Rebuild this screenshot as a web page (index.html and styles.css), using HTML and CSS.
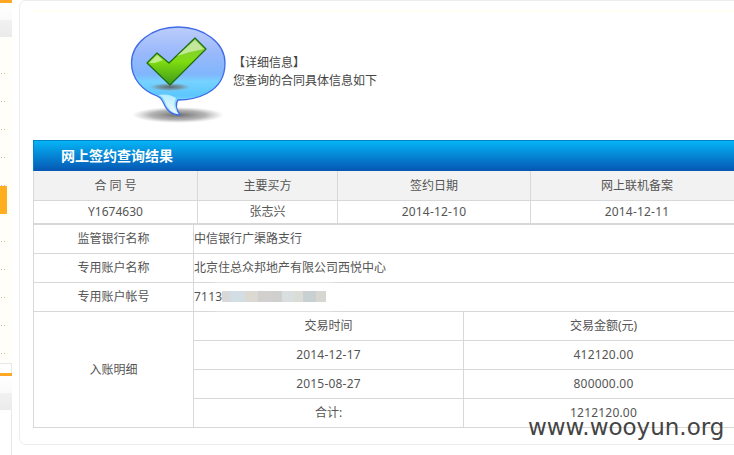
FILE: index.html
```html
<!DOCTYPE html>
<html lang="zh">
<head>
<meta charset="utf-8">
<title>网上签约查询结果</title>
<link rel="stylesheet" href="styles.css">
</head>
<body>
<div class="page">
  <aside class="sidebar">
    <div class="side-panel">
      <div class="side-head"></div>
      <ul class="side-list">
        <li></li><li></li><li></li><li></li><li></li>
        <li class="current"></li><li></li><li></li><li></li><li></li><li></li>
      </ul>
    </div>
    <div class="side-head second"></div>
  </aside>
  <main class="card">
    <div class="notice-line"></div>
    <section class="intro">
      <svg class="intro-icon" width="100" height="112" viewBox="0 0 100 112" aria-hidden="true">
        <defs>
          <linearGradient id="bubble" x1="0" y1="0" x2="0" y2="1">
            <stop offset="0" stop-color="#bccdfb"/>
            <stop offset="0.3" stop-color="#99b8fb"/>
            <stop offset="0.54" stop-color="#80b6fc"/>
            <stop offset="0.62" stop-color="#76d2ff"/>
            <stop offset="0.78" stop-color="#5cc6fd"/>
            <stop offset="0.88" stop-color="#97e2fe"/>
            <stop offset="1" stop-color="#c8f2fe"/>
          </linearGradient>
          <linearGradient id="tail" x1="0" y1="0" x2="0" y2="1">
            <stop offset="0" stop-color="#b4ecfe"/>
            <stop offset="1" stop-color="#eef9fe"/>
          </linearGradient>
          <linearGradient id="check" x1="0" y1="0" x2="0" y2="1">
            <stop offset="0" stop-color="#8cc850"/>
            <stop offset="0.5" stop-color="#7fdc10"/>
            <stop offset="1" stop-color="#3d9a1c"/>
          </linearGradient>
          <radialGradient id="shade">
            <stop offset="0" stop-color="#555" stop-opacity="0.85"/>
            <stop offset="0.6" stop-color="#777" stop-opacity="0.55"/>
            <stop offset="1" stop-color="#999" stop-opacity="0"/>
          </radialGradient>
        </defs>
        <ellipse cx="48" cy="98" rx="46" ry="8" fill="url(#shade)"/>
        <path d="M48 10C22 10 1.500 26 1.500 46C1.500 62 13 74 27 79C33 81 33 87 37 92C41 97 45 98 50 98C46 92 45 87 48 83C62 83 95 78 95 46C95 26 74 10 48 10Z" fill="url(#bubble)" stroke="#3f6ae8" stroke-width="1.300" stroke-linejoin="round"/>
        <path d="M28 78C35 80 35 87 39 91C42 95 44 96 47 96C44 91 43 87 46 81C40 77 34 77 28 78Z" fill="url(#tail)"/>
        <ellipse cx="40" cy="70" rx="21" ry="4" fill="url(#shade)"/>
        <path d="M17 46L27 36L39 46L65 21L76 32L40 68Z" fill="url(#check)" stroke="#1d6d12" stroke-width="1.200" stroke-linejoin="round"/>
        <path d="M19 46L27 38L33 43L25 46ZM47 39L65 23L74 32L60 35Z" fill="#fff" opacity="0.5"/>
      </svg>
      <div class="intro-text">
        <p>【详细信息】</p>
        <p>您查询的合同具体信息如下</p>
      </div>
    </section>
    <h2 class="banner">网上签约查询结果</h2>
    <table class="summary">
      <colgroup><col class="s1"><col class="s2"><col class="s3"><col class="s4"></colgroup>
      <thead>
        <tr><th>合 同 号</th><th>主要买方</th><th>签约日期</th><th>网上联机备案</th></tr>
      </thead>
      <tbody>
        <tr><td>Y1674630</td><td>张志兴</td><td class="num">2014-12-10</td><td class="num">2014-12-11</td></tr>
      </tbody>
    </table>
    <table class="details">
      <colgroup><col class="d1"><col class="d2"><col class="d3"></colgroup>
      <tbody>
        <tr><td>监管银行名称</td><td class="value" colspan="2">中信银行广渠路支行</td></tr>
        <tr><td>专用账户名称</td><td class="value" colspan="2">北京住总众邦地产有限公司西悦中心</td></tr>
        <tr><td>专用账户帐号</td><td class="value" colspan="2"><span class="account"><span class="digits">7113</span><span class="mosaic"></span></span></td></tr>
        <tr><td rowspan="4">入账明细</td><td>交易时间</td><td>交易金额(元)</td></tr>
        <tr><td class="num">2014-12-17</td><td class="num">412120.00</td></tr>
        <tr><td class="num">2015-08-27</td><td class="num">800000.00</td></tr>
        <tr><td>合计:</td><td class="num">1212120.00</td></tr>
      </tbody>
    </table>
  </main>
</div>
<div class="watermark">www.wooyun.org</div>
</body>
</html>
```
FILE: styles.css
```css
html, body {
  margin: 0;
  padding: 0;
  width: 734px;
  height: 455px;
  overflow: hidden;
  background: #fff;
  font-family: "Noto Sans", "Noto Sans CJK SC", sans-serif;
  font-size: 12px;
  color: #555;
}
.page {
  display: flex;
  align-items: flex-start;
  width: 800px;
  height: 455px;
}
.sidebar {
  flex: none;
  width: 11px;
  height: 455px;
  border-right: 1px solid #e8e8e8;
  margin-right: 7px;
}
.side-panel {
  height: 364px;
  box-sizing: border-box;
  border-bottom: 1px solid #e8e8e8;
  background: #fffef9;
  margin-right: -1px;
  margin-bottom: 9px;
}
.side-head {
  box-sizing: border-box;
  height: 37px;
  border-top: 3px solid #ffa726;
  background: linear-gradient(#fff 0, #fafafa 50%, #f1f1f1 50%, #ebebeb 100%);
}
.side-head.second {
  height: 37px;
  margin-right: -1px;
}
.side-list {
  list-style: none;
  margin: 0;
  padding: 9px 0 0;
}
.side-list li {
  height: 28px;
  background: linear-gradient(90deg, transparent 1px, #cdb994 1px, #cdb994 2px, transparent 2px) 0 100% / 3px 1px repeat-x;
  background-size: 3px 1px;
  width: 6px;
}
.side-list li.current {
  width: 7px;
  background: #ffae1f;
}
.card {
  flex: none;
  box-sizing: border-box;
  width: 770px;
  height: 445px;
  border: 1px solid #ececec;
  border-radius: 7px;
  padding: 9px 0 0 13px;
  background: #fff;
}
.notice-line {
  height: 2px;
  background: #fffff2;
}
.intro {
  display: flex;
  align-items: flex-start;
  height: 128px;
}
.intro-icon {
  flex: none;
  margin: 5px 0 0 97px;
}
.intro-text {
  margin: 42px 0 0 3px;
  line-height: 18px;
  color: #444;
}
.intro-text p {
  margin: 0;
}
.banner {
  box-sizing: border-box;
  width: 711px;
  height: 31px;
  margin: 0;
  padding-left: 27px;
  border-top: 1px solid #0086c8;
  border-left: 1px solid #0086c8;
  background: linear-gradient(#06b4f6, #0556b2);
  color: #fff;
  font-size: 14px;
  font-weight: 700;
  line-height: 30px;
}
table {
  border-collapse: separate;
  border-spacing: 0;
  table-layout: fixed;
  width: 711px;
  border-left: 1px solid #d8d8d8;
}
.summary {
  border-bottom: 1px solid #d8d8d8;
}
.s1 { width: 164px; }
.s2 { width: 140px; }
.s3 { width: 193px; }
.s4 { width: 213px; }
.d1 { width: 160px; }
.d2 { width: 270px; }
.d3 { width: 280px; }
th, td {
  box-sizing: border-box;
  padding: 0 0 2px;
  text-align: center;
  font-weight: 400;
  border-right: 1px solid #d8d8d8;
  border-bottom: 1px solid #d8d8d8;
}
th {
  height: 30px;
  background: #f2f2f2;
}
.summary td {
  height: 23px;
}
.details td {
  height: 29px;
}
.details td.value {
  text-align: left;
}
.num {
  letter-spacing: 0.2px;
}
.account {
  position: relative;
  display: inline-block;
  letter-spacing: 0.2px;
}
.digits {
  position: relative;
  z-index: 1;
}
.mosaic {
  position: absolute;
  left: 28px;
  top: 3px;
  width: 104px;
  height: 11px;
  box-shadow: 0 0 6px 7px #fff;
  background: linear-gradient(90deg, #d8d8d8 0 8%, #d2dde4 8% 22%, #dcd8d2 22% 35%, #d2d0ce 35% 50%, #cfcfcd 50% 58%, #d9dedf 58% 70%, #dcdcd6 70% 78%, #c8d0d2 78% 90%, #d8d6d0 90% 100%);
}
.watermark {
  position: absolute;
  left: 528px;
  top: 413px;
  font-family: "DejaVu Sans", sans-serif;
  font-size: 23px;
  line-height: 28px;
  color: #444;
  white-space: nowrap;
}
```
